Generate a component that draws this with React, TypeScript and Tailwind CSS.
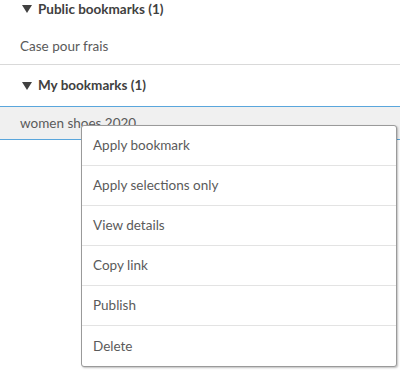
import React from "react";

const Tri = () => (
  <svg width="10" height="8" viewBox="0 0 10 8" className="shrink-0">
    <polygon points="0,0 10,0 5,8" fill="#404040" />
  </svg>
);

const items = [
  "Apply bookmark",
  "Apply selections only",
  "View details",
  "Copy link",
  "Publish",
  "Delete",
];

export default function App() {
  return (
    <div
      className="relative w-[400px] h-[372px] overflow-hidden bg-white text-[13.5px] text-[#5a5a5a]"
      style={{ fontFamily: "Lato, 'Open Sans', sans-serif" }}
    >
      <div className="-mt-[11px]">
        <div className="h-[40px] flex items-center gap-[6px] pl-[22px] font-bold text-[#404040]">
          <Tri />
          <span>Public bookmarks (1)</span>
        </div>
        <div className="h-[36px] flex items-center pl-[20px] border-b border-[#d9d9d9]">
          Case pour frais
        </div>
        <div className="h-[41px] flex items-center gap-[6px] pl-[22px] font-bold text-[#404040]">
          <Tri />
          <span>My bookmarks (1)</span>
        </div>
        <div className="h-[34px] flex items-center pl-[20px] bg-[#f0f0f0] border-y border-[#5aa6dc]">
          women shoes 2020
        </div>
      </div>
      <div className="absolute left-[81px] top-[125px] w-[316px] bg-white border border-[#9a9a9a] rounded-[3px] shadow-[1px_1px_2px_rgba(0,0,0,0.25)]">
        {items.map((t, i) => (
          <div
            key={t}
            className={`h-[40px] flex items-center pl-[11px] ${i < items.length - 1 ? "border-b border-[#e3e3e3]" : ""}`}
          >
            {t}
          </div>
        ))}
      </div>
    </div>
  );
}
